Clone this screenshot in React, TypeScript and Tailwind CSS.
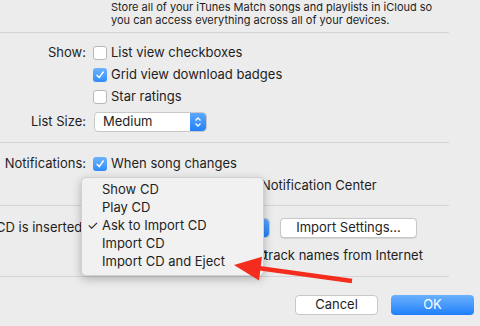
import React from "react";

const Check = ({ on }: { on?: boolean }) =>
  on ? (
    <span className="w-[14px] h-[14px] rounded-[3px] bg-gradient-to-b from-[#6cb3fd] to-[#2e8cfb] flex items-center justify-center shrink-0">
      <svg width="10" height="10" viewBox="0 0 10 10">
        <path d="M2 5.2 L4.2 7.6 L8.2 2" fill="none" stroke="#fff" strokeWidth="1.5" strokeLinecap="round" strokeLinejoin="round" />
      </svg>
    </span>
  ) : (
    <span className="w-[14px] h-[14px] rounded-[3px] bg-white border border-[#b8b8b8] shrink-0" />
  );

const Row = ({ label, on, children }: { label?: string; on?: boolean; children: React.ReactNode }) => (
  <div className="flex items-center h-[22px]">
    <div className="w-[86px] shrink-0 text-right whitespace-nowrap overflow-hidden flex justify-end">{label}</div>
    <div className="pl-[7px] flex items-center gap-[4px]">
      <Check on={on} />
      <span className="whitespace-nowrap">{children}</span>
    </div>
  </div>
);

const Divider = () => <div className="w-[449px] border-t border-[#d4d4d4]" />;

const Stepper = () => (
  <div className="w-[16px] self-stretch bg-gradient-to-b from-[#5aa7fd] to-[#1f80fa] rounded-r-[4px] flex items-center justify-center">
    <svg width="8" height="12" viewBox="0 0 8 12">
      <path d="M1.5 4.5 L4 2 L6.5 4.5 M1.5 7.5 L4 10 L6.5 7.5" fill="none" stroke="#fff" strokeWidth="1.3" />
    </svg>
  </div>
);

export default function App() {
  const items = ["Show CD", "Play CD", "Ask to Import CD", "Import CD", "Import CD and Eject"];
  return (
    <div className="relative w-[480px] h-[326px] overflow-hidden bg-[#ececec] text-[#1e1e1e] text-[13px] font-['Inter',sans-serif]">
      <div className="pl-[111px] h-[32px] pt-[1px] text-[11px] leading-[13px] whitespace-nowrap">
        <div>Store all of your iTunes Match songs and playlists in iCloud so</div>
        <div>you can access everything across all of your devices.</div>
      </div>
      <Divider />
      <div className="pt-[9px]">
        <Row label="Show:">List view checkboxes</Row>
        <Row on>Grid view download badges</Row>
        <Row>Star ratings</Row>
      </div>
      <div className="flex items-center h-[20px] mt-[4px]">
        <div className="w-[86px] text-right">List Size:</div>
        <div className="ml-[8px] w-[113px] h-[20px] bg-white border border-[#c8c8c8] rounded-[4px] flex items-center">
          <span className="flex-1 pl-[8px]">Medium</span>
          <Stepper />
        </div>
      </div>
      <div className="mt-[10px]">
        <Divider />
      </div>
      <div className="pt-[10px]">
        <Row label="Notifications:" on>When song changes</Row>
        <Row>
          <span className="inline-block w-[150px]">Keep all song changes in</span>Notification Center
        </Row>
      </div>
      <div className="mt-[8px]">
        <Divider />
      </div>
      <div className="flex items-center h-[22px] mt-[11px]">
        <div className="w-[86px] shrink-0 flex justify-end overflow-hidden whitespace-nowrap">When a CD is inserted:</div>
        <div className="ml-[7px] w-[177px] h-[20px] bg-white border border-[#c8c8c8] rounded-[4px] flex items-center">
          <span className="flex-1 pl-[8px]">Ask to Import CD</span>
          <Stepper />
        </div>
        <div className="ml-[10px] w-[137px] h-[20px] bg-white border border-[#c8c8c8] rounded-[4px] flex items-center justify-center shadow-[0_0.5px_1px_rgba(0,0,0,0.1)]">
          Import Settings...
        </div>
      </div>
      <div className="mt-[6px]">
        <Row>
          <span className="inline-block w-[153px]">Automatically retrieve CD</span>track names from Internet
        </Row>
      </div>
      <div className="mt-[9px]">
        <Divider />
      </div>
      <div className="flex justify-end gap-[13px] pr-[6px] mt-[18px]">
        <div className="w-[83px] h-[20px] bg-white border border-[#c8c8c8] rounded-[4px] flex items-center justify-center">Cancel</div>
        <div className="w-[83px] h-[20px] bg-gradient-to-b from-[#6ab1fd] to-[#1b7ffa] rounded-[4px] flex items-center justify-center text-white">OK</div>
      </div>

      <div className="absolute left-[81px] top-[177px] w-[183px] h-[99px] bg-[#f1f1f1] rounded-[5px] border border-[#d0d0d0] shadow-[0_3px_10px_rgba(0,0,0,0.25)] pt-[3px]">
        {items.map((t) => (
          <div key={t} className="h-[18px] flex items-center relative pl-[20px]">
            {t === "Ask to Import CD" && <span className="absolute left-[5px]">✓</span>}
            {t}
          </div>
        ))}
      </div>

      <svg className="absolute left-0 top-0 pointer-events-none" width="480" height="326">
        <line x1="352" y1="281" x2="258" y2="268" stroke="#f42c1e" strokeWidth="4.5" />
        <polygon points="234,265 262,256.7 259,280.5" fill="#f42c1e" />
      </svg>
    </div>
  );
}
